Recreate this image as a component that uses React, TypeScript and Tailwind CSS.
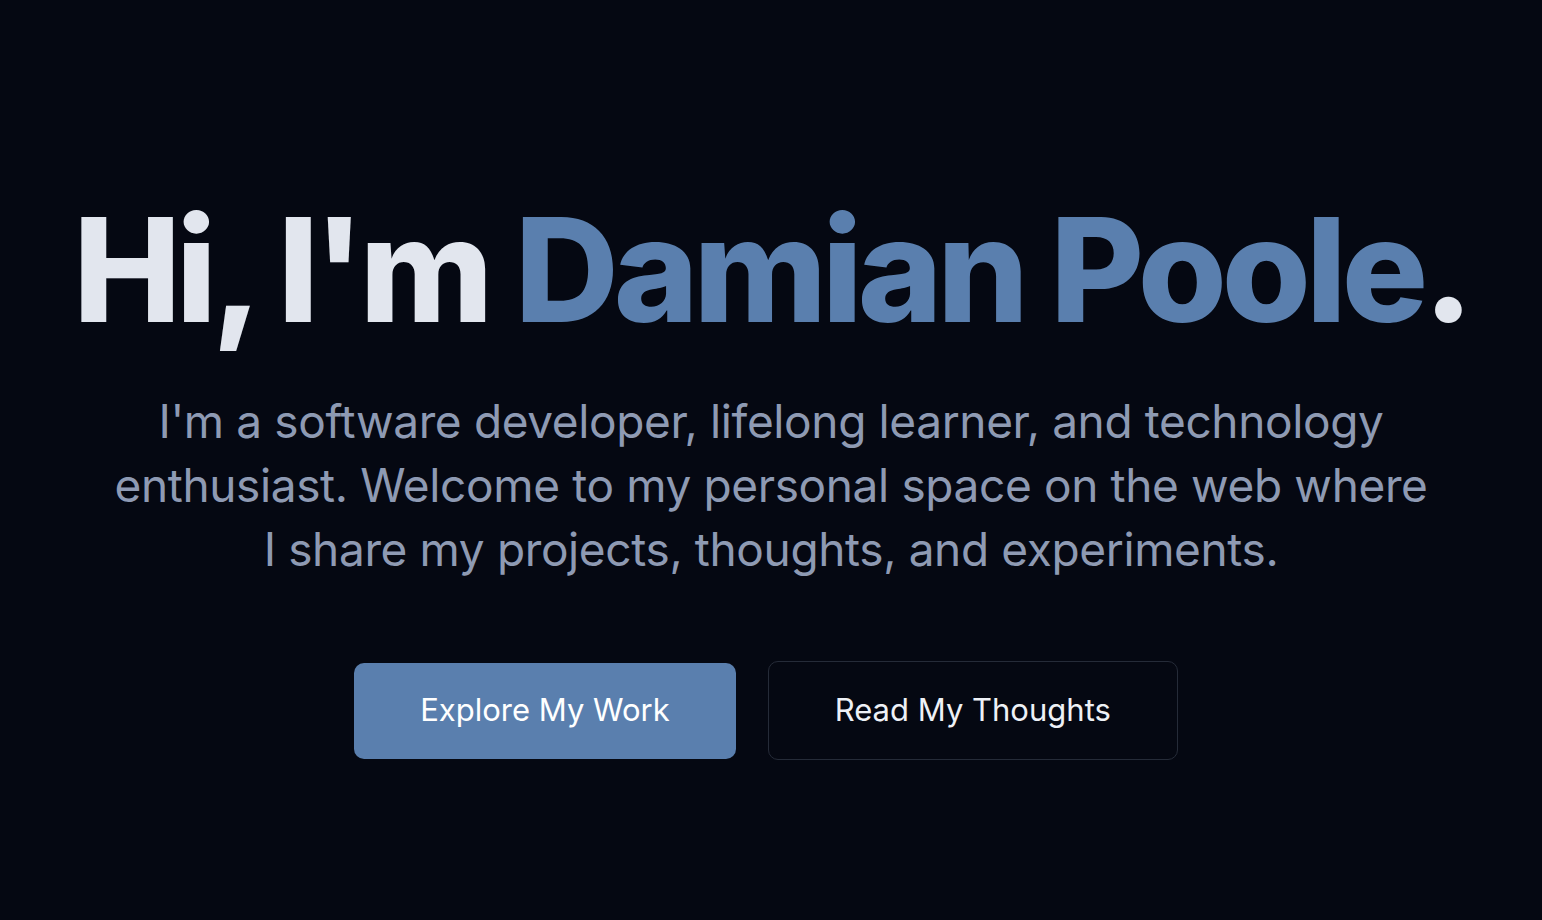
import React from "react";

export default function App() {
  return (
    <div className="min-h-screen w-full bg-[#050812] flex flex-col items-center pt-[198px]" style={{ fontFamily: "Inter, 'Noto Sans', sans-serif" }}>
      <h1 className="text-[144px] leading-none font-extrabold tracking-[-0.035em] text-[#e2e6ee] whitespace-nowrap">
        Hi, I'm <span className="text-[#5a7fae]">Damian Poole</span>.
      </h1>
      <p className="mt-[47px] max-w-[1326px] text-center text-[46px] leading-[64px] tracking-[-0.008em] text-[#8e9ab3] font-normal">
        I'm a software developer, lifelong learner, and technology enthusiast. Welcome to my personal space on the web where I share my projects, thoughts, and experiments.
      </p>
      <div className="mt-[80px] flex items-center gap-8 pr-[10px]">
        <button className="h-[96px] px-[66px] rounded-[10px] bg-[#5a7fae] text-white text-[31px]">
          Explore My Work
        </button>
        <button className="h-[99px] px-[66px] rounded-[10px] border border-[#252b38] bg-transparent text-[#eef1f6] text-[31px]">
          Read My Thoughts
        </button>
      </div>
    </div>
  );
}
